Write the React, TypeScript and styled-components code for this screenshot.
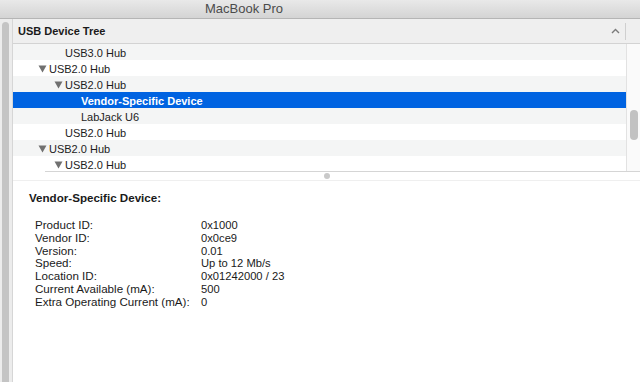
import styled, { createGlobalStyle } from 'styled-components';

const Global = createGlobalStyle`
    html, body {
        margin: 0;
        padding: 0;
        background: #ffffff;
    }
    * {
        box-sizing: border-box;
    }
`;

const Window = styled.div`
    width: 640px;
    height: 382px;
    overflow: hidden;
    display: flex;
    flex-direction: column;
    font-family: 'Liberation Sans', Arial, sans-serif;
    font-size: 11px;
    color: #1c1c1c;
`;

const TitleBar = styled.div`
    height: 19px;
    flex-shrink: 0;
    padding-left: 205px;
    line-height: 18px;
    font-size: 13px;
    color: #4b4b4b;
    background: linear-gradient(#e9e9e9, #d4d4d4);
    border-bottom: 1px solid #b5b5b5;
`;

const Body = styled.div`
    flex: 1;
    display: flex;
    min-height: 0;
`;

const Sidebar = styled.div`
    width: 13px;
    flex-shrink: 0;
    background: #ececec;
    border-right: 1px solid #d6d6d6;
    padding: 3px 0 0 2px;
`;

const SideThumb = styled.div`
    width: 7px;
    height: 100%;
    background: #c4c4c4;
    border-radius: 4px 4px 0 0;
`;

const Main = styled.div`
    flex: 1;
    display: flex;
    flex-direction: column;
    min-width: 0;
`;

const TreeHeader = styled.div`
    height: 25px;
    flex-shrink: 0;
    display: flex;
    align-items: center;
    background: #efefef;
    border-bottom: 1px solid #d3d3d3;
    padding-left: 5px;
`;

const HeaderTitle = styled.div`
    flex: 1;
    font-weight: bold;
    color: #1a1a1a;
`;

const SortChevron = styled.svg`
    width: 9px;
    height: 6px;
    margin-right: 5px;
`;

const HeaderDivider = styled.div`
    width: 1px;
    height: 17px;
    background: #cfcfcf;
    margin-right: 14px;
`;

const TreeArea = styled.div`
    height: 127px;
    flex-shrink: 0;
    display: flex;
    overflow: hidden;
`;

const Rows = styled.div`
    flex: 1;
    display: flex;
    flex-direction: column;
`;

const Row = styled.div<{ $alt: boolean; $selected: boolean; $level: number }>`
    height: 16px;
    flex-shrink: 0;
    display: flex;
    align-items: center;
    padding-top: 2px;
    padding-left: ${(p) => 36 + p.$level * 16}px;
    position: relative;
    background: ${(p) => (p.$selected ? '#0063e1' : p.$alt ? '#f4f5f5' : '#ffffff')};
    color: ${(p) => (p.$selected ? '#ffffff' : '#1c1c1c')};
    font-weight: ${(p) => (p.$selected ? 'bold' : 'normal')};
    white-space: nowrap;
`;

const Disclosure = styled.svg`
    position: absolute;
    width: 9px;
    height: 8px;
    margin-left: -11px;
    top: 5px;
`;

const Track = styled.div`
    width: 14px;
    flex-shrink: 0;
    background: #fafafa;
    border-left: 1px solid #e2e2e2;
    padding: 66px 0 0 3px;
`;

const Thumb = styled.div`
    width: 8px;
    height: 30px;
    border-radius: 4px;
    background: #c2c2c2;
`;

const Splitter = styled.div`
    height: 10px;
    flex-shrink: 0;
    display: flex;
    flex-direction: column;
`;

const SplitLine = styled.div`
    height: 1px;
    margin-left: 32px;
    background: #d5d5d5;
`;

const SplitGrip = styled.div`
    flex: 1;
    display: flex;
    align-items: center;
    justify-content: center;
    border-bottom: 1px solid #efefef;
    padding-left: 1px;
`;

const GripDot = styled.div`
    width: 6px;
    height: 6px;
    border-radius: 50%;
    background: #c9c9c9;
`;

const Details = styled.div`
    flex: 1;
    padding: 10px 0 0 16px;
    background: #ffffff;
    font-size: 11.6px;
`;

const DetailTitle = styled.div`
    font-weight: bold;
    color: #1a1a1a;
    line-height: 14px;
    margin-bottom: 14px;
`;

const PropList = styled.div`
    display: grid;
    grid-template-columns: 166px auto;
    padding-left: 6px;
    line-height: 12.8px;
    color: #1a1a1a;
`;

const PropValue = styled.span`
    font-size: 11.2px;
`;

const tree = [
    { name: 'USB3.0 Hub', level: 1, open: false },
    { name: 'USB2.0 Hub', level: 0, open: true },
    { name: 'USB2.0 Hub', level: 1, open: true },
    { name: 'Vendor-Specific Device', level: 2, open: false, selected: true },
    { name: 'LabJack U6', level: 2, open: false },
    { name: 'USB2.0 Hub', level: 1, open: false },
    { name: 'USB2.0 Hub', level: 0, open: true },
    { name: 'USB2.0 Hub', level: 1, open: true },
];

const props = [
    ['Product ID:', '0x1000'],
    ['Vendor ID:', '0x0ce9'],
    ['Version:', '0.01'],
    ['Speed:', 'Up to 12 Mb/s'],
    ['Location ID:', '0x01242000 / 23'],
    ['Current Available (mA):', '500'],
    ['Extra Operating Current (mA):', '0'],
];

const App = () => {
    return (
        <>
            <Global />
            <Window>
                <TitleBar>MacBook Pro</TitleBar>
                <Body>
                    <Sidebar>
                        <SideThumb />
                    </Sidebar>
                    <Main>
                        <TreeHeader>
                            <HeaderTitle>USB Device Tree</HeaderTitle>
                            <SortChevron viewBox='0 0 9 6'>
                                <path d='M1 5 L4.5 1.5 L8 5' fill='none' stroke='#7a7a7a' strokeWidth='1.4' />
                            </SortChevron>
                            <HeaderDivider />
                        </TreeHeader>
                        <TreeArea>
                            <Rows>
                                {tree.map((node, i) => (
                                    <Row key={i} $alt={i % 2 === 0} $selected={!!node.selected} $level={node.level}>
                                        {node.open && (
                                            <Disclosure viewBox='0 0 9 8'>
                                                <path d='M0.5 0.5 L8.5 0.5 L4.5 7.5 Z' fill='#707070' />
                                            </Disclosure>
                                        )}
                                        {node.name}
                                    </Row>
                                ))}
                            </Rows>
                            <Track>
                                <Thumb />
                            </Track>
                        </TreeArea>
                        <Splitter>
                            <SplitLine />
                            <SplitGrip>
                                <GripDot />
                            </SplitGrip>
                        </Splitter>
                        <Details>
                            <DetailTitle>Vendor-Specific Device:</DetailTitle>
                            <PropList>
                                {props.flatMap(([label, value]) => [
                                    <span key={label}>{label}</span>,
                                    <PropValue key={label + '-v'}>{value}</PropValue>,
                                ])}
                            </PropList>
                        </Details>
                    </Main>
                </Body>
            </Window>
        </>
    );
};

export default App;
